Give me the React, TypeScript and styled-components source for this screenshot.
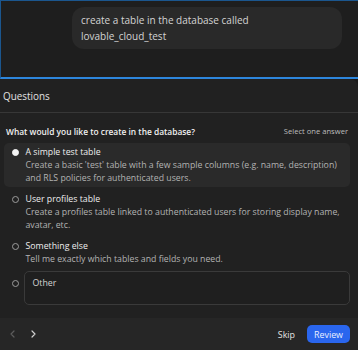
import React from "react";
import styled, { createGlobalStyle } from "styled-components";

const Global = createGlobalStyle`
  html, body { margin: 0; padding: 0; background: #1a1a1a; }
  body { font-family: "Open Sans", "Noto Sans", sans-serif; }
  * { box-sizing: border-box; }
`;

const Page = styled.div`
  width: 358px;
  height: 350px;
  display: flex;
  flex-direction: column;
  background: #1a1a1a;
  overflow: hidden;
`;

const ChatArea = styled.div`
  height: 79px;
  flex-shrink: 0;
  border-top: 1px solid #1b568e;
  border-left: 1px solid #1b568e;
  border-bottom: 2px solid #2d86dc;
  background: #1e1e1e;
  display: flex;
  justify-content: flex-end;
  padding: 6px 16px 0 0;
`;

const Bubble = styled.div`
  width: 270px;
  height: 42px;
  border-radius: 12px;
  background: #292929;
  color: #d4d4d4;
  font-size: 10px;
  line-height: 16px;
  padding: 5px 9px 0 9px;
`;

const Panel = styled.div`
  flex: 1;
  display: flex;
  flex-direction: column;
  background: #212121;
  border-top-right-radius: 8px;
`;

const Header = styled.div`
  height: 34px;
  flex-shrink: 0;
  display: flex;
  align-items: center;
  padding: 0 3px;
  color: #e2e2e2;
  font-size: 9.9px;
  border-bottom: 1px solid #373737;
`;

const Body = styled.div`
  flex: 1;
  padding: 8px 8px 0 4px;
  display: flex;
  flex-direction: column;
  gap: 3px;
`;

const QuestionRow = styled.div`
  display: flex;
  justify-content: space-between;
  align-items: center;
  padding: 0 2px 0 2px;
  height: 20px;
  margin-bottom: -1px;
`;

const QuestionText = styled.div`
  color: #f0f0f0;
  font-size: 8.4px;
  font-weight: 600;
`;

const Hint = styled.div`
  color: #bdbdbd;
  font-size: 7.6px;
`;

const Option = styled.div<{ $selected?: boolean }>`
  display: flex;
  align-items: flex-start;
  gap: 7px;
  padding: 2px 4px 2px 4px;
  border-radius: 5px;
  background: ${(p) => (p.$selected ? "#2a2a2a" : "transparent")};
`;

const Radio = styled.span<{ $selected?: boolean; $offset?: number }>`
  width: 7px;
  height: 7px;
  margin: ${(p) => p.$offset ?? 3.5}px 0 0 3.5px;
  border-radius: 50%;
  flex-shrink: 0;
  background: ${(p) => (p.$selected ? "#f4f4f4" : "transparent")};
  border: 1.2px solid ${(p) => (p.$selected ? "#f4f4f4" : "#9c9c9c")};
`;

const OptionText = styled.div`
  display: flex;
  flex-direction: column;
`;

const OptionTitle = styled.div`
  color: #eeeeee;
  font-size: 8.75px;
  line-height: 14px;
`;

const OptionDesc = styled.div`
  color: #b3b3b3;
  font-size: 8.75px;
  line-height: 13px;
`;

const OtherRow = styled.div`
  display: flex;
  align-items: flex-start;
  padding-left: 4px;
`;

const OtherInput = styled.div`
  flex: 1;
  height: 34px;
  border: 1px solid #3a3a3a;
  border-radius: 5px;
  background: #1f1f1f;
  color: #d2d2d2;
  font-size: 8.8px;
  line-height: 14px;
  padding: 4px 8px;
  margin-left: 5px;
`;

const Footer = styled.div`
  height: 32px;
  flex-shrink: 0;
  background: #262626;
  display: flex;
  align-items: center;
  padding: 0 8px 0 10px;
`;

const NavButtons = styled.div`
  display: flex;
  gap: 16px;
  align-items: center;
  flex: 1;
`;

const NavBtn = styled.span<{ $disabled?: boolean }>`
  display: flex;
  width: 5px;
  justify-content: center;
  color: ${(p) => (p.$disabled ? "#5c5c5c" : "#cfcfcf")};
`;

const Skip = styled.span`
  color: #e4e4e4;
  font-size: 8.9px;
  margin-right: 12px;
`;

const Review = styled.button`
  height: 18px;
  width: 43px;
  border: none;
  border-radius: 5px;
  background: #2a66ee;
  color: #e9efff;
  font-family: inherit;
  font-size: 8.9px;
  padding: 0;
`;

const Chevron = ({ dir }: { dir: "left" | "right" }) => (
  <svg width="5" height="8" viewBox="0 0 5 8" fill="none">
    <path
      d={dir === "left" ? "M4 1 L1 4 L4 7" : "M1 1 L4 4 L1 7"}
      stroke="currentColor"
      strokeWidth="1.2"
      strokeLinecap="round"
      strokeLinejoin="round"
    />
  </svg>
);

const options = [
  {
    title: "A simple test table",
    desc: "Create a basic 'test' table with a few sample columns (e.g. name, description) and RLS policies for authenticated users.",
    selected: true,
  },
  {
    title: "User profiles table",
    desc: "Create a profiles table linked to authenticated users for storing display name, avatar, etc.",
    selected: false,
  },
  {
    title: "Something else",
    desc: "Tell me exactly which tables and fields you need.",
    selected: false,
  },
];

export default function App() {
  return (
    <>
      <Global />
      <Page>
        <ChatArea>
          <Bubble>
            create a table in the database called
            <br />
            lovable_cloud_test
          </Bubble>
        </ChatArea>
        <Panel>
          <Header>Questions</Header>
          <Body>
            <QuestionRow>
              <QuestionText>What would you like to create in the database?</QuestionText>
              <Hint>Select one answer</Hint>
            </QuestionRow>
            {options.map((o) => (
              <Option key={o.title} $selected={o.selected}>
                <Radio $selected={o.selected} />
                <OptionText>
                  <OptionTitle>{o.title}</OptionTitle>
                  <OptionDesc>{o.desc}</OptionDesc>
                </OptionText>
              </Option>
            ))}
            <OtherRow>
              <Radio $offset={8.5} />
              <OtherInput>Other</OtherInput>
            </OtherRow>
          </Body>
          <Footer>
            <NavButtons>
              <NavBtn $disabled>
                <Chevron dir="left" />
              </NavBtn>
              <NavBtn>
                <Chevron dir="right" />
              </NavBtn>
            </NavButtons>
            <Skip>Skip</Skip>
            <Review>Review</Review>
          </Footer>
        </Panel>
      </Page>
    </>
  );
}
